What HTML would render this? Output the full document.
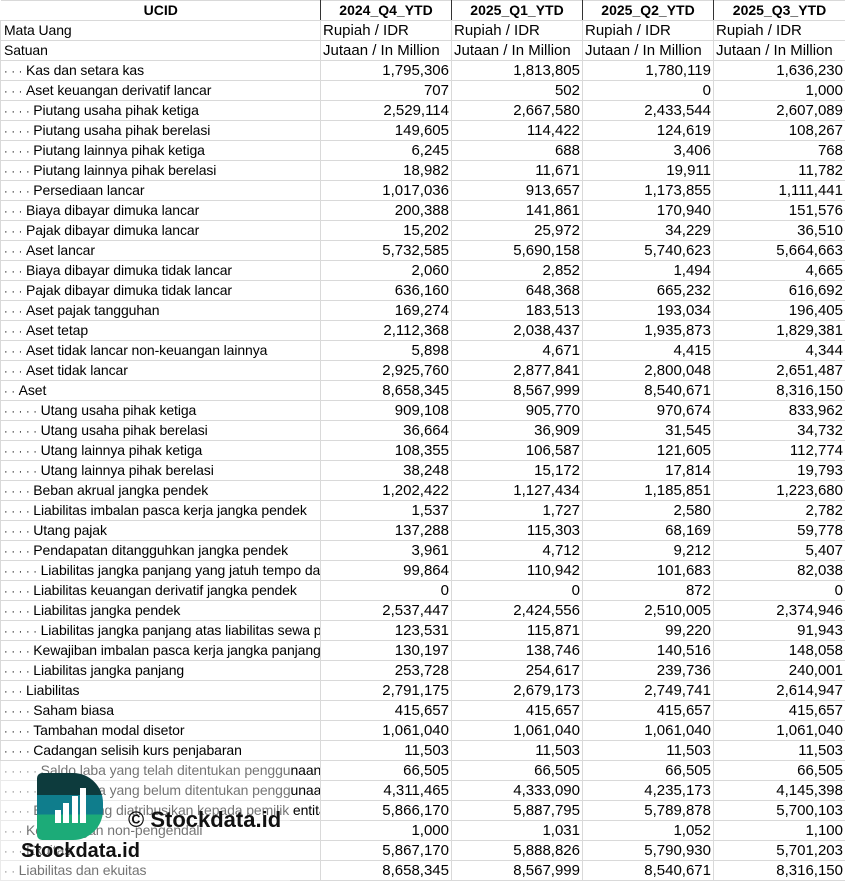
<!DOCTYPE html>
<html><head><meta charset="utf-8"><style>
*{margin:0;padding:0;box-sizing:border-box}
body{width:845px;height:881px;overflow:hidden;background:#fff;font-family:"Liberation Sans",Arial,sans-serif;font-size:15px;color:#000;position:relative}
table{border-collapse:collapse;table-layout:fixed;width:845px;position:absolute;left:0;top:0}
td{height:20px;border:1px solid #d9d9d9;white-space:nowrap;overflow:hidden;padding:0 2px;line-height:19px;text-align:right;vertical-align:middle}
td:first-child{text-align:left;padding-left:3px;font-size:14px;letter-spacing:-0.1px}
tr.h td{font-weight:bold;font-size:14px;text-align:center;border-left:1px solid #333;border-right:1px solid #333;letter-spacing:0}
tr.h td:first-child{text-align:center;border-left:none}
tr.u td{text-align:left}
#ov{position:absolute;left:0;top:761px;width:290px;height:120px;background:rgba(255,255,255,0.45)}
#logo{position:absolute;left:37px;top:773px;width:66px;height:67px;border-radius:5px 30px 30px 5px;overflow:hidden;background:linear-gradient(#0d3b3d 0 33%,#0f7d8c 33% 62%,#1cab78 62%)}
.b{position:absolute;background:#fff;width:6px}
.t1{position:absolute;left:21px;top:840px;font-weight:bold;font-size:20px;color:#111}
.t2{position:absolute;left:128px;top:807px;font-weight:bold;font-size:22px;color:#111}
.d{font-size:11px;letter-spacing:0.3px;line-height:1}
</style></head><body>
<table>
<colgroup><col style="width:320px"><col style="width:131px"><col style="width:131px"><col style="width:131px"><col style="width:132px"></colgroup>
<tr class="h"><td>UCID</td><td>2024_Q4_YTD</td><td>2025_Q1_YTD</td><td>2025_Q2_YTD</td><td>2025_Q3_YTD</td></tr>
<tr class="u"><td>Mata Uang</td><td>Rupiah / IDR</td><td>Rupiah / IDR</td><td>Rupiah / IDR</td><td>Rupiah / IDR</td></tr>
<tr class="u"><td>Satuan</td><td>Jutaan / In Million</td><td>Jutaan / In Million</td><td>Jutaan / In Million</td><td>Jutaan / In Million</td></tr>
<tr><td><span class="d">· · · </span>Kas dan setara kas</td><td>1,795,306</td><td>1,813,805</td><td>1,780,119</td><td>1,636,230</td></tr>
<tr><td><span class="d">· · · </span>Aset keuangan derivatif lancar</td><td>707</td><td>502</td><td>0</td><td>1,000</td></tr>
<tr><td><span class="d">· · · · </span>Piutang usaha pihak ketiga</td><td>2,529,114</td><td>2,667,580</td><td>2,433,544</td><td>2,607,089</td></tr>
<tr><td><span class="d">· · · · </span>Piutang usaha pihak berelasi</td><td>149,605</td><td>114,422</td><td>124,619</td><td>108,267</td></tr>
<tr><td><span class="d">· · · · </span>Piutang lainnya pihak ketiga</td><td>6,245</td><td>688</td><td>3,406</td><td>768</td></tr>
<tr><td><span class="d">· · · · </span>Piutang lainnya pihak berelasi</td><td>18,982</td><td>11,671</td><td>19,911</td><td>11,782</td></tr>
<tr><td><span class="d">· · · · </span>Persediaan lancar</td><td>1,017,036</td><td>913,657</td><td>1,173,855</td><td>1,111,441</td></tr>
<tr><td><span class="d">· · · </span>Biaya dibayar dimuka lancar</td><td>200,388</td><td>141,861</td><td>170,940</td><td>151,576</td></tr>
<tr><td><span class="d">· · · </span>Pajak dibayar dimuka lancar</td><td>15,202</td><td>25,972</td><td>34,229</td><td>36,510</td></tr>
<tr><td><span class="d">· · · </span>Aset lancar</td><td>5,732,585</td><td>5,690,158</td><td>5,740,623</td><td>5,664,663</td></tr>
<tr><td><span class="d">· · · </span>Biaya dibayar dimuka tidak lancar</td><td>2,060</td><td>2,852</td><td>1,494</td><td>4,665</td></tr>
<tr><td><span class="d">· · · </span>Pajak dibayar dimuka tidak lancar</td><td>636,160</td><td>648,368</td><td>665,232</td><td>616,692</td></tr>
<tr><td><span class="d">· · · </span>Aset pajak tangguhan</td><td>169,274</td><td>183,513</td><td>193,034</td><td>196,405</td></tr>
<tr><td><span class="d">· · · </span>Aset tetap</td><td>2,112,368</td><td>2,038,437</td><td>1,935,873</td><td>1,829,381</td></tr>
<tr><td><span class="d">· · · </span>Aset tidak lancar non-keuangan lainnya</td><td>5,898</td><td>4,671</td><td>4,415</td><td>4,344</td></tr>
<tr><td><span class="d">· · · </span>Aset tidak lancar</td><td>2,925,760</td><td>2,877,841</td><td>2,800,048</td><td>2,651,487</td></tr>
<tr><td><span class="d">· · </span>Aset</td><td>8,658,345</td><td>8,567,999</td><td>8,540,671</td><td>8,316,150</td></tr>
<tr><td><span class="d">· · · · · </span>Utang usaha pihak ketiga</td><td>909,108</td><td>905,770</td><td>970,674</td><td>833,962</td></tr>
<tr><td><span class="d">· · · · · </span>Utang usaha pihak berelasi</td><td>36,664</td><td>36,909</td><td>31,545</td><td>34,732</td></tr>
<tr><td><span class="d">· · · · · </span>Utang lainnya pihak ketiga</td><td>108,355</td><td>106,587</td><td>121,605</td><td>112,774</td></tr>
<tr><td><span class="d">· · · · · </span>Utang lainnya pihak berelasi</td><td>38,248</td><td>15,172</td><td>17,814</td><td>19,793</td></tr>
<tr><td><span class="d">· · · · </span>Beban akrual jangka pendek</td><td>1,202,422</td><td>1,127,434</td><td>1,185,851</td><td>1,223,680</td></tr>
<tr><td><span class="d">· · · · </span>Liabilitas imbalan pasca kerja jangka pendek</td><td>1,537</td><td>1,727</td><td>2,580</td><td>2,782</td></tr>
<tr><td><span class="d">· · · · </span>Utang pajak</td><td>137,288</td><td>115,303</td><td>68,169</td><td>59,778</td></tr>
<tr><td><span class="d">· · · · </span>Pendapatan ditangguhkan jangka pendek</td><td>3,961</td><td>4,712</td><td>9,212</td><td>5,407</td></tr>
<tr><td><span class="d">· · · · · </span>Liabilitas jangka panjang yang jatuh tempo dalam satu tahun</td><td>99,864</td><td>110,942</td><td>101,683</td><td>82,038</td></tr>
<tr><td><span class="d">· · · · </span>Liabilitas keuangan derivatif jangka pendek</td><td>0</td><td>0</td><td>872</td><td>0</td></tr>
<tr><td><span class="d">· · · · </span>Liabilitas jangka pendek</td><td>2,537,447</td><td>2,424,556</td><td>2,510,005</td><td>2,374,946</td></tr>
<tr><td><span class="d">· · · · · </span>Liabilitas jangka panjang atas liabilitas sewa pembiayaan</td><td>123,531</td><td>115,871</td><td>99,220</td><td>91,943</td></tr>
<tr><td><span class="d">· · · · </span>Kewajiban imbalan pasca kerja jangka panjang</td><td>130,197</td><td>138,746</td><td>140,516</td><td>148,058</td></tr>
<tr><td><span class="d">· · · · </span>Liabilitas jangka panjang</td><td>253,728</td><td>254,617</td><td>239,736</td><td>240,001</td></tr>
<tr><td><span class="d">· · · </span>Liabilitas</td><td>2,791,175</td><td>2,679,173</td><td>2,749,741</td><td>2,614,947</td></tr>
<tr><td><span class="d">· · · · </span>Saham biasa</td><td>415,657</td><td>415,657</td><td>415,657</td><td>415,657</td></tr>
<tr><td><span class="d">· · · · </span>Tambahan modal disetor</td><td>1,061,040</td><td>1,061,040</td><td>1,061,040</td><td>1,061,040</td></tr>
<tr><td><span class="d">· · · · </span>Cadangan selisih kurs penjabaran</td><td>11,503</td><td>11,503</td><td>11,503</td><td>11,503</td></tr>
<tr><td><span class="d">· · · · · </span>Saldo laba yang telah ditentukan penggunaannya</td><td>66,505</td><td>66,505</td><td>66,505</td><td>66,505</td></tr>
<tr><td><span class="d">· · · · · </span>Saldo laba yang belum ditentukan penggunaannya</td><td>4,311,465</td><td>4,333,090</td><td>4,235,173</td><td>4,145,398</td></tr>
<tr><td><span class="d">· · · · </span>Ekuitas yang diatribusikan kepada pemilik entitas induk</td><td>5,866,170</td><td>5,887,795</td><td>5,789,878</td><td>5,700,103</td></tr>
<tr><td><span class="d">· · · </span>Kepentingan non-pengendali</td><td>1,000</td><td>1,031</td><td>1,052</td><td>1,100</td></tr>
<tr><td><span class="d">· · · </span>Ekuitas</td><td>5,867,170</td><td>5,888,826</td><td>5,790,930</td><td>5,701,203</td></tr>
<tr><td><span class="d">· · </span>Liabilitas dan ekuitas</td><td>8,658,345</td><td>8,567,999</td><td>8,540,671</td><td>8,316,150</td></tr>
</table>
<div id="ov"></div>
<div id="logo">
<div class="b" style="left:18px;top:37px;height:13px"></div>
<div class="b" style="left:26px;top:30px;height:20px"></div>
<div class="b" style="left:35px;top:23px;height:27px"></div>
<div class="b" style="left:43px;top:15px;height:35px"></div>
</div>
<div class="t2">© Stockdata.id</div>
<div class="t1">Stockdata.id</div>
</body></html>
